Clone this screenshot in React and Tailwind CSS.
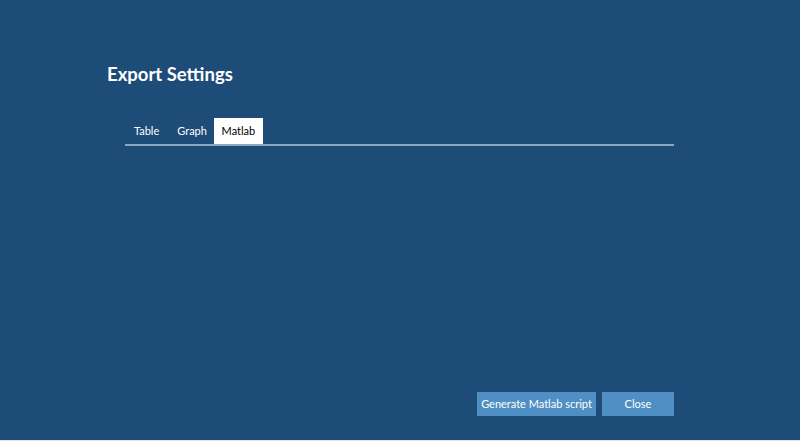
export default function App() {
  return (
    <div className="w-[800px] h-[441px] flex flex-col bg-[#dfe6ee]" style={{ fontFamily: "Lato, 'Open Sans', sans-serif" }}>
      <div className="h-[440px] bg-[#1e4c79] flex flex-col pl-[107px] pr-[126px]">
        <h1 className="mt-[62px] text-[18.5px] leading-[24px] font-bold text-white">Export Settings</h1>
        <div className="ml-[18px] mt-[32px] flex items-end border-b-2 border-[#8fa6c0] text-[11px] text-white h-[28px]">
          <div className="px-[9px] h-[26px] flex items-center">Table</div>
          <div className="pl-[9px] pr-[7px] h-[26px] flex items-center">Graph</div>
          <div className="w-[49px] justify-center h-[26px] flex items-center bg-white text-black">Matlab</div>
        </div>
        <div className="flex-1" />
        <div className="flex justify-end gap-[6px] mb-[24px]">
          <button className="h-[24px] w-[119px] whitespace-nowrap bg-[#4f8fc4] text-white text-[11px]">Generate Matlab script</button>
          <button className="h-[24px] w-[72px] whitespace-nowrap bg-[#4f8fc4] text-white text-[11px]">Close</button>
        </div>
      </div>
    </div>
  );
}
